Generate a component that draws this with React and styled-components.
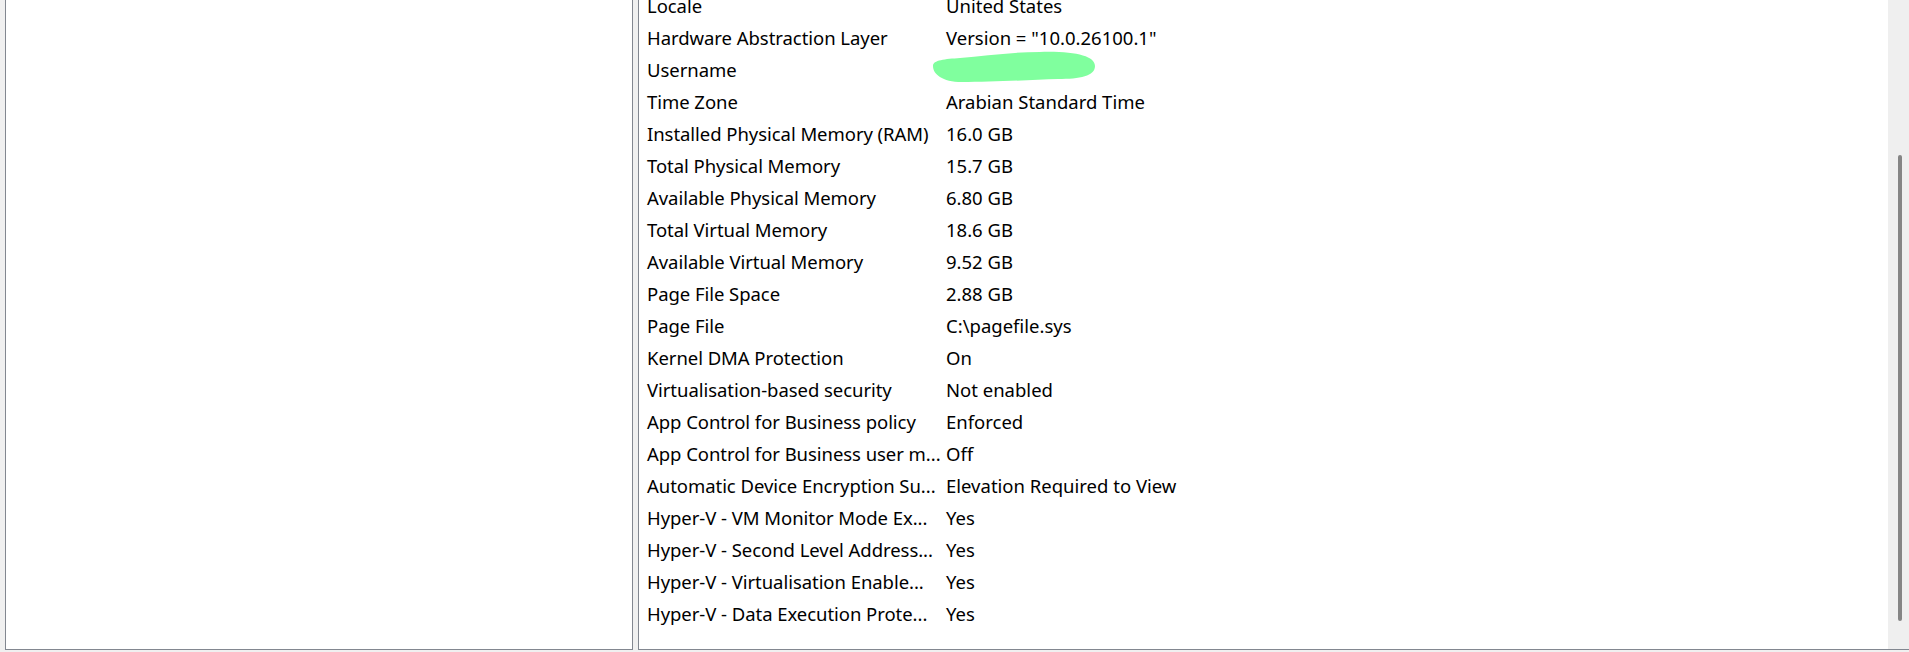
import React from 'react';
import styled, { createGlobalStyle } from 'styled-components';

const rows = [
    ['Locale', 'United States'],
    ['Hardware Abstraction Layer', 'Version = "10.0.26100.1"'],
    ['Username', 'user', true],
    ['Time Zone', 'Arabian Standard Time'],
    ['Installed Physical Memory (RAM)', '16.0 GB'],
    ['Total Physical Memory', '15.7 GB'],
    ['Available Physical Memory', '6.80 GB'],
    ['Total Virtual Memory', '18.6 GB'],
    ['Available Virtual Memory', '9.52 GB'],
    ['Page File Space', '2.88 GB'],
    ['Page File', 'C:\\pagefile.sys'],
    ['Kernel DMA Protection', 'On'],
    ['Virtualisation-based security', 'Not enabled'],
    ['App Control for Business policy', 'Enforced'],
    ['App Control for Business user m...', 'Off'],
    ['Automatic Device Encryption Su...', 'Elevation Required to View'],
    ['Hyper-V - VM Monitor Mode Ex...', 'Yes'],
    ['Hyper-V - Second Level Address...', 'Yes'],
    ['Hyper-V - Virtualisation Enable...', 'Yes'],
    ['Hyper-V - Data Execution Prote...', 'Yes'],
];

const GlobalStyle = createGlobalStyle`
    html, body {
        margin: 0;
        padding: 0;
        background: #f0f0f0;
        overflow: hidden;
    }
`;

const Window = styled.div`
    display: flex;
    gap: 5px;
    height: 652px;
    padding: 0 0 2px 5px;
    box-sizing: border-box;
    font-family: "Noto Sans", "Open Sans", sans-serif;
    font-size: 18.5px;
    color: #000;
`;

const Panel = styled.div`
    display: flex;
    background: #fff;
    border: 1px solid #828790;
    border-top: none;
    border-right: ${props => (props.open ? 'none' : '1px solid #828790')};
    box-sizing: border-box;
    height: 650px;
    overflow: hidden;
    ${props => (props.grow ? 'flex: 1;' : `width: ${props.width}px;`)}
`;

// list is scrolled: the first row is partly above the top edge
const ListArea = styled.div`
    flex: 1;
    overflow: hidden;
`;

const List = styled.div`
    margin-top: -10px;
`;

const Row = styled.div`
    display: flex;
    height: 32px;
    line-height: 32px;
    white-space: nowrap;
`;

const NameCell = styled.div`
    width: 299px;
    flex-shrink: 0;
    padding-left: 8px;
    box-sizing: border-box;
    letter-spacing: -0.05px;
`;

const ValueCell = styled.div`
    position: relative;
    padding-left: 8px;
`;

const Redaction = styled.svg`
    position: absolute;
    left: -8px;
    top: -3px;
`;

const ScrollTrack = styled.div`
    width: 21px;
    flex-shrink: 0;
    background: #efefef;
    padding: 155px 7px 0 10px;
    box-sizing: border-box;
`;

const Thumb = styled.div`
    width: 4px;
    height: 466px;
    border-radius: 2px;
    background: #858585;
`;

export default function App() {
    return (
        <>
            <GlobalStyle />
            <Window>
                <Panel width={628} />
                <Panel grow open>
                    <ListArea>
                        <List>
                            {rows.map(([name, value, hidden]) => (
                                <Row key={name}>
                                    <NameCell>{name}</NameCell>
                                    <ValueCell>
                                        {value}
                                        {hidden && (
                                            <Redaction width="170" height="34" viewBox="0 0 170 34">
                                                <path
                                                    d="M3,15 C3,9 15,8 30,7 C55,5 80,1 110,1 C145,0 165,5 165,15 C165,25 150,28 128,28 C100,29 60,31 32,31 C12,31 3,23 3,15 Z"
                                                    fill="#80ff9e"
                                                />
                                            </Redaction>
                                        )}
                                    </ValueCell>
                                </Row>
                            ))}
                        </List>
                    </ListArea>
                    <ScrollTrack>
                        <Thumb />
                    </ScrollTrack>
                </Panel>
            </Window>
        </>
    );
}
